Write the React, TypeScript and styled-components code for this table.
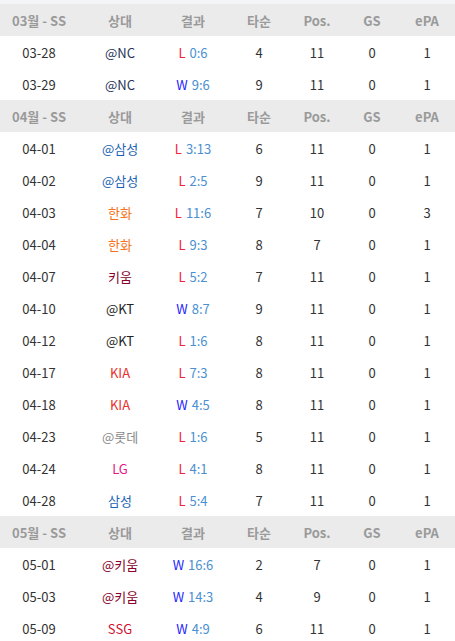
import styled, { createGlobalStyle } from "styled-components";

const GlobalStyle = createGlobalStyle`
  body {
    margin: 0;
    background: #fff;
    font-family: "Noto Sans CJK KR", "Noto Sans", sans-serif;
  }
`;

const Wrap = styled.div`
  width: 455px;
  border-top: 4px solid #f4f5f7;
`;

const Row = styled.div<{ $head?: boolean }>`
  display: grid;
  grid-template-columns: 78px 84px 62px 70px 46px 64px 46px;
  height: 32px;
  align-items: center;
  background: ${(p) => (p.$head ? "#ebebeb" : "#fff")};
  font-size: 13px;
  font-weight: ${(p) => (p.$head ? 700 : 400)};
  color: ${(p) => (p.$head ? "#9a9a9a" : "#333")};
`;

const Cell = styled.div<{ $color?: string }>`
  text-align: center;
  white-space: nowrap;
  color: ${(p) => p.$color || "inherit"};
`;

const Mark = styled.span<{ $win: boolean }>`
  color: ${(p) => (p.$win ? "#2525ff" : "#f5203a")};
  margin-right: 4px;
`;

const Score = styled.span`
  color: #4a90d2;
`;

const teamColors: Record<string, string> = {
  NC: "#25345a",
  삼성: "#1a62b3",
  한화: "#f37321",
  키움: "#86002a",
  KT: "#222",
  KIA: "#e8302c",
  롯데: "#8a8a8a",
  LG: "#e6138a",
  SSG: "#d0102e",
};

type Game = [string, string, string, string, number, number, number, number];

const months: { title: string; games: Game[] }[] = [
  {
    title: "03월 - SS",
    games: [
      ["03-28", "@NC", "L", "0:6", 4, 11, 0, 1],
      ["03-29", "@NC", "W", "9:6", 9, 11, 0, 1],
    ],
  },
  {
    title: "04월 - SS",
    games: [
      ["04-01", "@삼성", "L", "3:13", 6, 11, 0, 1],
      ["04-02", "@삼성", "L", "2:5", 9, 11, 0, 1],
      ["04-03", "한화", "L", "11:6", 7, 10, 0, 3],
      ["04-04", "한화", "L", "9:3", 8, 7, 0, 1],
      ["04-07", "키움", "L", "5:2", 7, 11, 0, 1],
      ["04-10", "@KT", "W", "8:7", 9, 11, 0, 1],
      ["04-12", "@KT", "L", "1:6", 8, 11, 0, 1],
      ["04-17", "KIA", "L", "7:3", 8, 11, 0, 1],
      ["04-18", "KIA", "W", "4:5", 8, 11, 0, 1],
      ["04-23", "@롯데", "L", "1:6", 5, 11, 0, 1],
      ["04-24", "LG", "L", "4:1", 8, 11, 0, 1],
      ["04-28", "삼성", "L", "5:4", 7, 11, 0, 1],
    ],
  },
  {
    title: "05월 - SS",
    games: [
      ["05-01", "@키움", "W", "16:6", 2, 7, 0, 1],
      ["05-03", "@키움", "W", "14:3", 4, 9, 0, 1],
      ["05-09", "SSG", "W", "4:9", 6, 11, 0, 1],
    ],
  },
];

export default function App() {
  return (
    <>
      <GlobalStyle />
      <Wrap>
        {months.map((m) => (
          <div key={m.title}>
            <Row $head>
              <Cell>{m.title}</Cell>
              <Cell>상대</Cell>
              <Cell>결과</Cell>
              <Cell>타순</Cell>
              <Cell>Pos.</Cell>
              <Cell>GS</Cell>
              <Cell>ePA</Cell>
            </Row>
            {m.games.map(([date, opp, res, score, order, pos, gs, epa]) => (
              <Row key={date}>
                <Cell>{date}</Cell>
                <Cell $color={teamColors[opp.replace("@", "")]}>{opp}</Cell>
                <Cell>
                  <Mark $win={res === "W"}>{res}</Mark>
                  <Score>{score}</Score>
                </Cell>
                <Cell>{order}</Cell>
                <Cell>{pos}</Cell>
                <Cell>{gs}</Cell>
                <Cell>{epa}</Cell>
              </Row>
            ))}
          </div>
        ))}
      </Wrap>
    </>
  );
}
